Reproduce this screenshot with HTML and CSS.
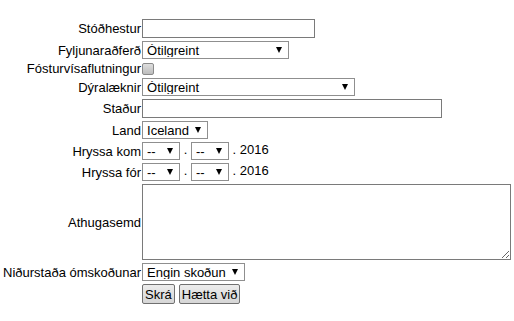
FILE: index.html
```html
<!DOCTYPE html>
<html lang="is">
<head>
    <meta charset="UTF-8">
    <title>Skráning</title>
    <link rel="stylesheet" href="styles.css">
</head>
<body>
    <form id="skraning">
        <table class="form-table">
            <tr>
                <td class="lbl">Stóðhestur</td>
                <td><input type="text" class="txt txt-short"></td>
            </tr>
            <tr>
                <td class="lbl">Fyljunaraðferð</td>
                <td><span class="sel"><select class="w-method"><option>Ótilgreint</option></select></span></td>
            </tr>
            <tr>
                <td class="lbl">Fósturvísaflutningur</td>
                <td><input type="checkbox" class="chk"></td>
            </tr>
            <tr>
                <td class="lbl">Dýralæknir</td>
                <td><span class="sel"><select class="w-vet"><option>Ótilgreint</option></select></span></td>
            </tr>
            <tr>
                <td class="lbl">Staður</td>
                <td><input type="text" class="txt txt-long"></td>
            </tr>
            <tr>
                <td class="lbl">Land</td>
                <td><span class="sel"><select class="w-land"><option>Iceland</option></select></span></td>
            </tr>
            <tr>
                <td class="lbl">Hryssa kom</td>
                <td class="date"><span class="sel"><select class="w-date"><option>--</option></select></span> . <span class="sel"><select class="w-date"><option>--</option></select></span> . 2016</td>
            </tr>
            <tr>
                <td class="lbl">Hryssa fór</td>
                <td class="date"><span class="sel"><select class="w-date"><option>--</option></select></span> . <span class="sel"><select class="w-date"><option>--</option></select></span> . 2016</td>
            </tr>
            <tr>
                <td class="lbl">Athugasemd</td>
                <td><textarea class="note"></textarea></td>
            </tr>
            <tr>
                <td class="lbl">Niðurstaða ómskoðunar</td>
                <td><span class="sel"><select class="w-result"><option>Engin skoðun</option></select></span></td>
            </tr>
            <tr>
                <td></td>
                <td class="buttons"><button type="submit">Skrá</button> <button type="button">Hætta við</button></td>
            </tr>
        </table>
    </form>
</body>
</html>
```
FILE: styles.css
```css
body {
    font-family: "Liberation Sans", Arial, sans-serif;
    font-size: 13px;
    color: #000;
    margin: 0;
    padding-top: 17px;
}
.form-table {
    border-collapse: separate;
    border-spacing: 0 1px;
}
.form-table td {
    padding: 1px 0;
    line-height: 13px;
    vertical-align: middle;
}
.form-table td.lbl {
    text-align: right;
    padding: 1px 1px 1px 3px;
    white-space: nowrap;
}
.txt {
    box-sizing: border-box;
    height: 19px;
    border: 1px solid #7a7a7a;
    padding: 0 3px;
    font: inherit;
    display: block;
}
.txt-short {
    width: 173px;
}
.txt-long {
    width: 300px;
}
.sel {
    position: relative;
    display: inline-block;
    vertical-align: middle;
}
.sel select {
    -webkit-appearance: none;
    appearance: none;
    box-sizing: border-box;
    height: 18px;
    border: 1px solid #8f8f8f;
    background: #fff;
    color: #000;
    font: inherit;
    padding: 0 0 0 4px;
    margin: 0;
    display: block;
}
.sel::after {
    content: "";
    position: absolute;
    right: 7px;
    top: 6px;
    width: 0;
    height: 0;
    border-left: 3px solid transparent;
    border-right: 3px solid transparent;
    border-top: 6px solid #000;
    pointer-events: none;
}
.w-method {
    width: 147px;
}
.w-vet {
    width: 213px;
}
.w-land {
    width: 66px;
}
.w-date {
    width: 38px;
}
.w-result {
    width: 103px;
}
.date {
    white-space: nowrap;
}
.chk {
    -webkit-appearance: none;
    appearance: none;
    display: block;
    width: 12px;
    height: 12px;
    margin: 0;
    border: 1px solid #8a8a8a;
    border-radius: 2px;
    background: linear-gradient(#dedede, #bcbcbc);
    box-sizing: border-box;
}
.note {
    display: block;
    box-sizing: border-box;
    width: 369px;
    height: 76px;
    border: 1px solid #7a7a7a;
    margin: 0;
    font: inherit;
}
.buttons {
    display: flex;
    gap: 4px;
}
button {
    font: inherit;
    color: #000;
    height: 20px;
    padding: 0 2px;
    margin: 0;
    border: 1px solid #707070;
    border-radius: 2px;
    background: linear-gradient(#ececec, #d6d6d6);
}
```
